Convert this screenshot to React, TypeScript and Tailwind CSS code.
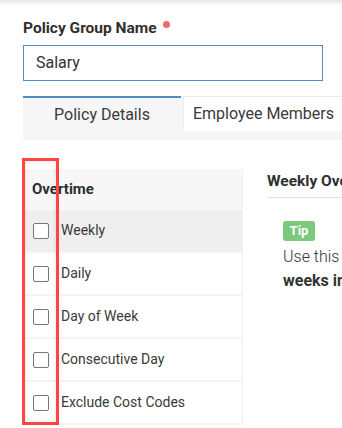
import React from "react";

const rows = ["Weekly", "Daily", "Day of Week", "Consecutive Day", "Exclude Cost Codes"];

export default function App() {
  return (
    <div
      className="relative w-[342px] h-[428px] overflow-hidden bg-white text-[#333]"
      style={{ fontFamily: "Roboto, 'Liberation Sans', sans-serif" }}
    >
      {/* header shadow */}
      <div className="h-[6px] bg-gradient-to-b from-[#e6e6e6] to-white" />

      <div className="pl-[23px]">
        <div className="mt-[12px] flex h-5 items-start">
          <span className="text-[15.5px] font-bold leading-5 text-[#2f2f2f]">Policy Group Name</span>
          <span className="ml-[6px] mt-[3px] h-[7px] w-[7px] rounded-full bg-[#ec6b6b]" />
        </div>

        <div className="mt-[7px] flex h-[36px] w-[300px] items-center border border-[#4a8fca] px-3 text-[16px]">
          Salary
        </div>

        {/* tabs */}
        <div className="mt-[15px] h-[44px] w-[330px] bg-[#f6f6f6]">
          <div className="flex h-[35px] whitespace-nowrap text-[16px] text-[#3a3a3a]">
            <div className="flex w-[158px] shrink-0 items-center justify-center border-t-2 border-[#4a8fca]">
              Policy Details
            </div>
            <div className="ml-[2px] flex w-[160px] shrink-0 items-center justify-center border-l border-t border-[#ececec] bg-white">
              Employee Members
            </div>
          </div>
        </div>

        {/* body */}
        <div className="mt-[29px] flex">
          <div className="w-[220px] shrink-0 border-r border-[#f0f0f0]">
            <div className="flex h-[41px] items-center bg-[#f7f7f7] pl-[9px] text-[15px] font-bold text-[#2f2f2f]">
              Overtime
            </div>
            {rows.map((r, i) => (
              <div
                key={r}
                className={
                  i === 0
                    ? "flex h-[43px] items-center border-b-2 border-[#f4f4f4] bg-[#efefef] pl-[10px]"
                    : "flex h-[43px] items-center border-b-2 border-[#f4f4f4] bg-white pl-[10px]"
                }
              >
                <span className="h-4 w-4 shrink-0 rounded-[2px] border border-[#777] bg-white" />
                <span className="ml-[12px] whitespace-nowrap text-[14px] text-[#3a3a3a]">{r}</span>
              </div>
            ))}
          </div>

          <div className="min-w-0 flex-1 overflow-hidden pl-6">
            <div className="whitespace-nowrap border-b border-[#dedede] pb-[6px] pt-[2px] text-[15.5px] font-bold leading-5 text-[#2f2f2f]">
              Weekly Overtime
            </div>
            <div className="pl-4 pt-5">
              <span className="inline-flex h-5 w-8 items-center justify-center rounded-[3px] bg-[#7cc97d] text-[13px] font-bold text-white">
                Tip
              </span>
              <p className="mt-[3px] whitespace-nowrap text-[16px] font-light leading-6 text-[#333]">
                Use this policy to set overtime for
                <br />
                <span className="font-bold">weeks in which hours exceed</span>
              </p>
            </div>
          </div>
        </div>
      </div>

      {/* highlight overlay */}
      <div className="pointer-events-none absolute left-[22px] top-[158px] h-[267px] w-[37px] border-[3px] border-[#ff4444] shadow-[inset_0_0_4px_rgba(0,0,0,0.12)]" />
    </div>
  );
}
